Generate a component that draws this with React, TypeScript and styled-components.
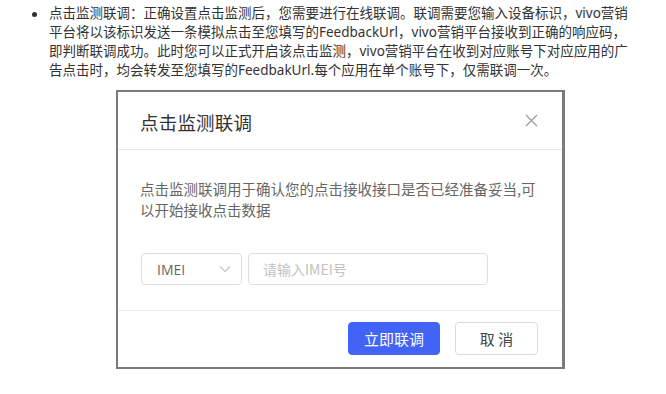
import * as React from "react";
import styled, { createGlobalStyle } from "styled-components";

const GlobalStyle = createGlobalStyle`
  html, body {
    margin: 0;
    padding: 0;
    background: #ffffff;
  }
  body {
    font-family: "Noto Sans", "Noto Sans CJK SC", sans-serif;
  }
`;

const Page = styled.div`
  width: 666px;
  height: 394px;
  overflow: hidden;
  padding-top: 4px;
  box-sizing: border-box;
`;

const Notes = styled.ul`
  margin: 0;
  padding: 0 0 0 49px;
  list-style: none;
`;

const Note = styled.li`
  position: relative;
  width: 582px;
  font-size: 13.5px;
  line-height: 19px;
  color: #333333;
  font-family: "Noto Sans", "Noto Sans CJK SC", sans-serif;

  &::before {
    content: "";
    position: absolute;
    left: -17px;
    top: 8px;
    width: 5px;
    height: 5px;
    border-radius: 50%;
    background: #333333;
  }
`;

const Shot = styled.div`
  margin: 10px 0 0 116px;
  width: 449px;
  height: 279px;
  box-sizing: border-box;
  border: 2px solid #7b7b7b;
  border-right-width: 3px;
  background: #ffffff;
  display: flex;
  flex-direction: column;
  font-family: "Noto Sans CJK SC", "Noto Sans", sans-serif;
`;

const Header = styled.div`
  height: 58px;
  flex: none;
  display: flex;
  align-items: center;
  justify-content: space-between;
  padding: 2px 24px 0 22px;
  box-sizing: border-box;
  border-bottom: 1px solid #e8e8e8;
`;

const Title = styled.div`
  font-size: 18.5px;
  color: #333333;
  letter-spacing: 0.2px;
`;

const Close = styled.button`
  border: none;
  background: none;
  padding: 0;
  width: 13px;
  height: 13px;
  display: flex;
  margin-top: -2px;
  cursor: pointer;
`;

const Body = styled.div`
  flex: 1;
  padding: 28px 22px 0 22px;
  border-bottom: 1px solid #ececec;
`;

const Desc = styled.p`
  margin: 0;
  width: 400px;
  font-size: 14.5px;
  line-height: 21px;
  color: #666666;
`;

const InputRow = styled.div`
  display: flex;
  gap: 6px;
  margin-top: 33px;
  margin-left: 1px;
`;

const Select = styled.div`
  width: 101px;
  height: 32px;
  box-sizing: border-box;
  border: 1px solid #dedede;
  border-radius: 4px;
  display: flex;
  align-items: center;
  justify-content: space-between;
  padding: 0 10px 0 15px;
  font-family: "Open Sans", "Noto Sans", sans-serif;
  font-size: 14px;
  color: #666666;
`;

const Field = styled.input`
  width: 240px;
  height: 32px;
  box-sizing: border-box;
  border: 1px solid #dedede;
  border-radius: 4px;
  padding: 0 14px;
  font-family: "Noto Sans CJK SC", "Noto Sans", sans-serif;
  font-size: 14px;
  outline: none;

  &::placeholder {
    color: #c2c2c2;
  }
`;

const Footer = styled.div`
  height: 56px;
  flex: none;
  display: flex;
  align-items: center;
  justify-content: flex-end;
  gap: 15px;
  padding: 0 24px 1px 0;
  box-sizing: border-box;
`;

const Button = styled.button<{ $primary?: boolean }>`
  height: 33px;
  width: ${(p) => (p.$primary ? "92px" : "83px")};
  border-radius: 4px;
  border: 1px solid ${(p) => (p.$primary ? "#4163f6" : "#dcdcdc")};
  background: ${(p) => (p.$primary ? "#4163f6" : "#ffffff")};
  color: ${(p) => (p.$primary ? "#ffffff" : "#444444")};
  font-family: "Noto Sans CJK SC", sans-serif;
  font-size: 15px;
  padding: 0;
  cursor: pointer;
`;

const Chevron = () => (
  <svg width="12" height="8" viewBox="0 0 12 8">
    <path d="M1 1.5 L6 6.5 L11 1.5" fill="none" stroke="#c4c4c4" strokeWidth="1.2" />
  </svg>
);

const CloseIcon = () => (
  <svg width="13" height="13" viewBox="0 0 13 13">
    <path d="M1 1 L12 12 M12 1 L1 12" stroke="#9a9a9a" strokeWidth="1.2" />
  </svg>
);

const App: React.FunctionComponent = () => {
  return (
    <Page>
      <GlobalStyle />
      <Notes>
        <Note>
          点击监测联调：正确设置点击监测后，您需要进行在线联调。联调需要您输入设备标识，vivo营销平台将以该标识发送一条模拟点击至您填写的FeedbackUrl，vivo营销平台接收到正确的响应码，即判断联调成功。此时您可以正式开启该点击监测，vivo营销平台在收到对应账号下对应应用的广告点击时，均会转发至您填写的FeedbakUrl.每个应用在单个账号下，仅需联调一次。
        </Note>
      </Notes>
      <Shot>
        <Header>
          <Title>点击监测联调</Title>
          <Close aria-label="关闭">
            <CloseIcon />
          </Close>
        </Header>
        <Body>
          <Desc>点击监测联调用于确认您的点击接收接口是否已经准备妥当,可以开始接收点击数据</Desc>
          <InputRow>
            <Select>
              <span>IMEI</span>
              <Chevron />
            </Select>
            <Field placeholder="请输入IMEI号" />
          </InputRow>
        </Body>
        <Footer>
          <Button $primary>立即联调</Button>
          <Button>取 消</Button>
        </Footer>
      </Shot>
    </Page>
  );
};

export default App;
